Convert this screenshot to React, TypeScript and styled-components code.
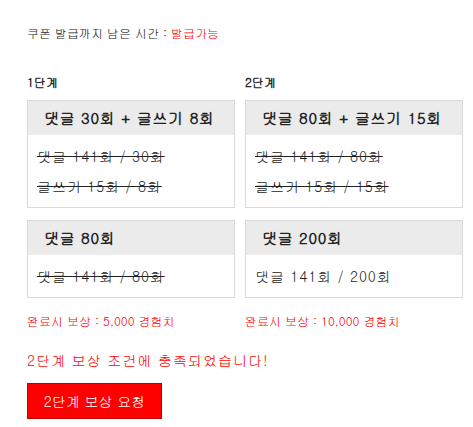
import React from "react";
import styled, { createGlobalStyle } from "styled-components";

const GlobalStyle = createGlobalStyle`
  html, body {
    margin: 0;
    padding: 0;
    background: #fff;
  }
  body {
    font-family: Gulim, "Noto Sans CJK KR", "Noto Sans", sans-serif;
    color: #333;
  }
`;

const Page = styled.div`
  padding: 25px 0 0 27px;
  width: 473px;
  box-sizing: border-box;
`;

const Timer = styled.p`
  margin: 0;
  font-size: 12px;
  line-height: 16px;
  color: #222;
`;

const Red = styled.span`
  color: #f00;
`;

const Steps = styled.div`
  display: grid;
  grid-template-columns: 208px 218px;
  column-gap: 10px;
  margin-top: 33px;
`;

const Column = styled.div`
  display: flex;
  flex-direction: column;
`;

const StepLabel = styled.div`
  font-size: 12px;
  font-weight: 700;
  line-height: 16px;
  color: #222;
  margin-bottom: 10px;
`;

const Box = styled.div`
  border: 1px solid #d9d9d9;
  background: #fff;
  & + & {
    margin-top: 12px;
  }
`;

const BoxHead = styled.div`
  height: 34px;
  line-height: 34px;
  background: #ebebeb;
  padding-left: 16px;
  font-size: 15px;
  font-weight: 700;
  letter-spacing: 0.7px;
  color: #222;
  white-space: nowrap;
`;

const BoxBody = styled.div`
  padding: 6px 9px;
`;

const Line = styled.div<{ $done?: boolean }>`
  font-size: 14px;
  line-height: 30px;
  letter-spacing: 0.9px;
  color: #222;
  text-decoration: ${(p) => (p.$done ? "line-through" : "none")};
`;

const Reward = styled.div`
  margin-top: 15px;
  font-size: 12px;
  line-height: 16px;
  color: #f00;
`;

const Notice = styled.p`
  margin: 22px 0 0;
  font-size: 14px;
  line-height: 18px;
  letter-spacing: 1px;
  color: #f00;
`;

const RequestButton = styled.button`
  margin-top: 14px;
  width: 135px;
  height: 36px;
  background: #f00;
  border: 1px solid #c00000;
  color: #fff;
  font-family: inherit;
  font-size: 14px;
  cursor: pointer;
  padding: 0;
`;

type Mission = { title: string; lines: { text: string; done: boolean }[] };

const steps: { label: string; missions: Mission[]; reward: string }[] = [
  {
    label: "1단계",
    missions: [
      {
        title: "댓글 30회 + 글쓰기 8회",
        lines: [
          { text: "댓글 141회 / 30회", done: true },
          { text: "글쓰기 15회 / 8회", done: true },
        ],
      },
      {
        title: "댓글 80회",
        lines: [{ text: "댓글 141회 / 80회", done: true }],
      },
    ],
    reward: "완료시 보상 : 5,000 경험치",
  },
  {
    label: "2단계",
    missions: [
      {
        title: "댓글 80회 + 글쓰기 15회",
        lines: [
          { text: "댓글 141회 / 80회", done: true },
          { text: "글쓰기 15회 / 15회", done: true },
        ],
      },
      {
        title: "댓글 200회",
        lines: [{ text: "댓글 141회 / 200회", done: false }],
      },
    ],
    reward: "완료시 보상 : 10,000 경험치",
  },
];

export default function App() {
  return (
    <>
      <GlobalStyle />
      <Page>
        <Timer>
          쿠폰 발급까지 남은 시간 : <Red>발급가능</Red>
        </Timer>
        <Steps>
          {steps.map((step) => (
            <Column key={step.label}>
              <StepLabel>{step.label}</StepLabel>
              {step.missions.map((m) => (
                <Box key={m.title}>
                  <BoxHead>{m.title}</BoxHead>
                  <BoxBody>
                    {m.lines.map((l) => (
                      <Line key={l.text} $done={l.done}>
                        {l.text}
                      </Line>
                    ))}
                  </BoxBody>
                </Box>
              ))}
              <Reward>{step.reward}</Reward>
            </Column>
          ))}
        </Steps>
        <Notice>2단계 보상 조건에 충족되었습니다!</Notice>
        <RequestButton>2단계 보상 요청</RequestButton>
      </Page>
    </>
  );
}
